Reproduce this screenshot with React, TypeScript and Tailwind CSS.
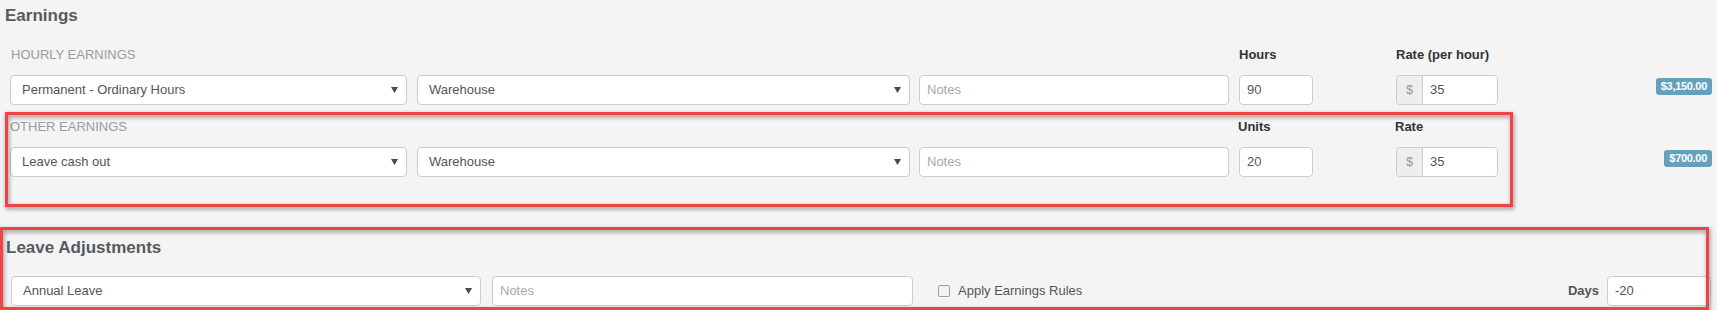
function Caret() {
  return (
    <svg width="7" height="6" viewBox="0 0 7 6" className="ml-auto shrink-0">
      <path d="M0 0h7L3.5 6z" fill="#4a4a4a" />
    </svg>
  );
}

function Select({ value, className }: { value: string; className: string }) {
  return (
    <div
      className={`flex h-[30px] items-center rounded-[4px] border border-[#cccccc] bg-white pl-[11px] pr-[8px] text-[13px] text-[#555] ${className}`}
    >
      <span>{value}</span>
      <Caret />
    </div>
  );
}

function TextInput({
  value,
  placeholder,
  className,
}: {
  value?: string;
  placeholder?: string;
  className: string;
}) {
  return (
    <div
      className={`flex h-[30px] items-center rounded-[4px] border border-[#cccccc] bg-white pl-[7px] text-[13px] ${className}`}
    >
      {value ? (
        <span className="text-[#555]">{value}</span>
      ) : (
        <span className="text-[#aaa]">{placeholder}</span>
      )}
    </div>
  );
}

function RateInput({ value }: { value: string }) {
  return (
    <div className="ml-[83px] flex h-[30px] w-[102px] overflow-hidden rounded-[4px] border border-[#cccccc] text-[13px]">
      <div className="flex w-[26px] items-center justify-center border-r border-[#cccccc] bg-[#eeeeee] text-[#999]">
        $
      </div>
      <div className="flex flex-1 items-center bg-white pl-[7px] text-[#555]">{value}</div>
    </div>
  );
}

function Badge({ amount }: { amount: string }) {
  return (
    <div className="ml-auto mr-[5px] mt-[3px] rounded-[3px] bg-[#65a1bf] px-[5px] py-[2px] text-[11px] font-bold leading-[13px] tracking-[-0.3px] text-white">
      {amount}
    </div>
  );
}

function EarningRow({
  type,
  location,
  qty,
  rate,
  amount,
}: {
  type: string;
  location: string;
  qty: string;
  rate: string;
  amount: string;
}) {
  return (
    <div className="flex items-start pl-[10px]">
      <Select value={type} className="w-[397px]" />
      <Select value={location} className="ml-[10px] w-[493px]" />
      <TextInput placeholder="Notes" className="ml-[9px] w-[310px]" />
      <TextInput value={qty} className="ml-[10px] w-[74px]" />
      <RateInput value={rate} />
      <Badge amount={amount} />
    </div>
  );
}

function LabelRow({ title, qty, rate }: { title: string; qty: string; rate: string }) {
  return (
    <div className="flex h-[18px] items-center text-[13px] leading-[18px]">
      <div className="w-[1228px] uppercase text-[#9b9b9b]">{title}</div>
      <div className="w-[157px] font-semibold text-[#333]">{qty}</div>
      <div className="font-semibold text-[#333]">{rate}</div>
    </div>
  );
}

export default function App() {
  return (
    <div className="relative h-[310px] w-[1717px] overflow-hidden bg-[#f4f4f4] font-['Liberation_Sans',Arial,sans-serif]">
      <h2 className="pl-[5px] pt-[4px] text-[17px] font-semibold leading-[24px] text-[#555a60]">
        Earnings
      </h2>

      <div className="mt-[18px] pl-[11px]">
        <LabelRow title="Hourly Earnings" qty="Hours" rate="Rate (per hour)" />
      </div>
      <div className="mt-[11px]">
        <EarningRow
          type="Permanent - Ordinary Hours"
          location="Warehouse"
          qty="90"
          rate="35"
          amount="$3,150.00"
        />
      </div>

      <div className="mt-[13px] pl-[10px]">
        <LabelRow title="Other Earnings" qty="Units" rate="Rate" />
      </div>
      <div className="mt-[11px]">
        <EarningRow
          type="Leave cash out"
          location="Warehouse"
          qty="20"
          rate="35"
          amount="$700.00"
        />
      </div>

      <h2 className="mt-[59px] pl-[6px] text-[17px] font-semibold leading-[24px] text-[#555a60]">
        Leave Adjustments
      </h2>
      <div className="mt-[16px] flex items-center pl-[11px] pr-[6px] text-[13px]">
        <Select value="Annual Leave" className="w-[470px]" />
        <TextInput placeholder="Notes" className="ml-[11px] w-[421px]" />
        <span className="ml-[25px] h-[12px] w-[12px] rounded-[2px] border border-[#a0a0a0] bg-[#f2f2f2]" />
        <span className="ml-[8px] text-[#555]">Apply Earnings Rules</span>
        <span className="ml-auto font-semibold text-[#555]">Days</span>
        <TextInput value="-20" className="ml-[8px] w-[104px] pl-[5px]" />
      </div>

      {/* annotation boxes */}
      <div className="absolute left-[5px] top-[112px] h-[95px] w-[1508px] border-[3px] border-[#f04343] drop-shadow-[1px_2px_2px_rgba(0,0,0,0.45)]" />
      <div className="absolute left-0 top-[227px] h-[83px] w-[1709px] border-[3px] border-[#f04343] drop-shadow-[1px_2px_2px_rgba(0,0,0,0.45)]" />
    </div>
  );
}
